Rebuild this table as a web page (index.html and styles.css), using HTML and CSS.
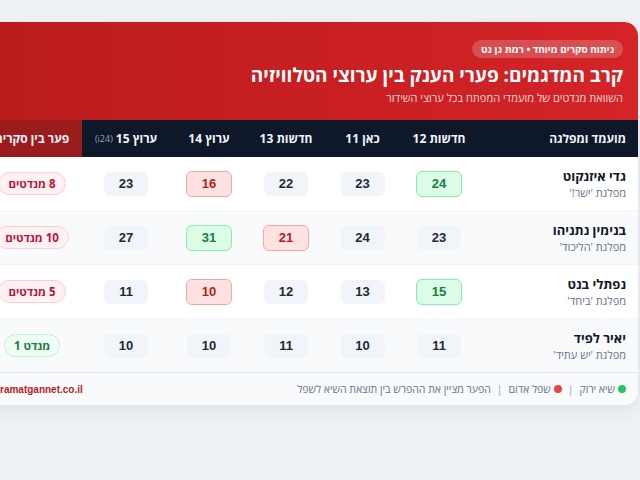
FILE: index.html
```html
<!DOCTYPE html>
<html lang="he" dir="rtl">
<head>
<meta charset="utf-8">
<title>קרב המדגמים</title>
<link rel="stylesheet" href="styles.css">
</head>
<body>
<div class="page">
  <div class="card">
    <header class="hero">
      <span class="badge">ניתוח סקרים מיוחד • רמת גן נט</span>
      <h1 class="title">קרב המדגמים: פערי הענק בין ערוצי הטלוויזיה</h1>
      <p class="subtitle">השוואת מנדטים של מועמדי המפתח בכל ערוצי השידור</p>
    </header>

    <div class="table">
      <div class="row head">
        <div class="cell name-cell">מועמד ומפלגה</div>
        <div class="cell">חדשות 12</div>
        <div class="cell">כאן 11</div>
        <div class="cell">חדשות 13</div>
        <div class="cell">ערוץ 14</div>
        <div class="cell">ערוץ 15 <span class="small">(i24)</span></div>
        <div class="cell gap-head">פער בין סקרים</div>
      </div>

      <div class="row">
        <div class="cell name-cell"><div class="name">גדי איזנקוט</div><div class="party">מפלגת 'ישר!'</div></div>
        <div class="cell"><span class="num hi">24</span></div>
        <div class="cell"><span class="num">23</span></div>
        <div class="cell"><span class="num">22</span></div>
        <div class="cell"><span class="num lo">16</span></div>
        <div class="cell"><span class="num">23</span></div>
        <div class="cell"><span class="pill red">8 מנדטים</span></div>
      </div>

      <div class="row alt">
        <div class="cell name-cell"><div class="name">בנימין נתניהו</div><div class="party">מפלגת 'הליכוד'</div></div>
        <div class="cell"><span class="num">23</span></div>
        <div class="cell"><span class="num">24</span></div>
        <div class="cell"><span class="num lo">21</span></div>
        <div class="cell"><span class="num hi">31</span></div>
        <div class="cell"><span class="num">27</span></div>
        <div class="cell"><span class="pill red">10 מנדטים</span></div>
      </div>

      <div class="row">
        <div class="cell name-cell"><div class="name">נפתלי בנט</div><div class="party">מפלגת 'ביחד'</div></div>
        <div class="cell"><span class="num hi">15</span></div>
        <div class="cell"><span class="num">13</span></div>
        <div class="cell"><span class="num">12</span></div>
        <div class="cell"><span class="num lo">10</span></div>
        <div class="cell"><span class="num">11</span></div>
        <div class="cell"><span class="pill red">5 מנדטים</span></div>
      </div>

      <div class="row alt last">
        <div class="cell name-cell"><div class="name">יאיר לפיד</div><div class="party">מפלגת 'יש עתיד'</div></div>
        <div class="cell"><span class="num">11</span></div>
        <div class="cell"><span class="num">10</span></div>
        <div class="cell"><span class="num">11</span></div>
        <div class="cell"><span class="num">10</span></div>
        <div class="cell"><span class="num">10</span></div>
        <div class="cell"><span class="pill green">מנדט 1</span></div>
      </div>
    </div>

    <footer class="foot">
      <div class="legend">
        <span class="dot dot-green"></span><span>שיא ירוק</span>
        <span class="sep">|</span>
        <span class="dot dot-red"></span><span>שפל אדום</span>
        <span class="sep">|</span>
        <span>הפער מציין את ההפרש בין תוצאת השיא לשפל</span>
      </div>
      <div class="site">ramatgannet.co.il</div>
    </footer>
  </div>
</div>
</body>
</html>
```

FILE: styles.css
```css
html, body {
  margin: 0;
  padding: 0;
  background: #eef2f7;
  font-family: "Open Sans", "Liberation Sans", Arial, sans-serif;
}

.page {
  direction: rtl;
  overflow: hidden;
  height: 480px;
  box-sizing: border-box;
  padding: 22px 2px 0 0;
}

.card {
  width: 656px;
  background: #ffffff;
  border-radius: 14px;
  overflow: hidden;
  box-shadow: 0 6px 18px rgba(15, 23, 42, 0.07);
}

.hero {
  display: flex;
  flex-direction: column;
  align-items: flex-start;
  height: 98px;
  box-sizing: border-box;
  padding: 18px 15px 0;
  background: linear-gradient(to left, #d42428 0%, #c81f22 50%, #b91c1c 100%);
  color: #ffffff;
}

.badge {
  display: block;
  height: 18px;
  line-height: 18px;
  padding: 0 9px;
  border-radius: 999px;
  background: rgba(255, 255, 255, 0.2);
  font-size: 10px;
  font-weight: 700;
}

.title {
  margin: 4px 0 0;
  font-size: 19px;
  line-height: 26px;
  font-weight: 700;
}

.subtitle {
  margin: 2px 0 0;
  font-size: 11px;
  line-height: 15px;
  color: rgba(255, 255, 255, 0.82);
}

.row {
  display: grid;
  grid-template-columns: 161px 76px 77px 76px 78px 88px 100px;
  height: 53px;
  border-bottom: 1px solid #f1f5f9;
  background: #ffffff;
}

.row.alt {
  background: #f8fafc;
}

.row.last {
  border-bottom: none;
}

.row.head {
  height: 37px;
  border-bottom: none;
  background: #0f172a;
  color: #f1f5f9;
  font-size: 12px;
  font-weight: 700;
}

.cell {
  display: flex;
  align-items: center;
  justify-content: center;
}

.name-cell {
  flex-direction: column;
  align-items: flex-start;
  justify-content: center;
  padding-right: 12px;
}

.head .name-cell {
  flex-direction: row;
  align-items: center;
  justify-content: flex-start;
}

.gap-head {
  background: #9b1c1c;
  white-space: nowrap;
}

.small {
  font-size: 9px;
  font-weight: 400;
  color: #94a3b8;
  margin-right: 3px;
}

.name {
  font-size: 13px;
  line-height: 18px;
  font-weight: 700;
  color: #0f172a;
}

.party {
  font-size: 11px;
  line-height: 15px;
  color: #64748b;
}

.num {
  display: flex;
  align-items: center;
  justify-content: center;
  width: 44px;
  height: 24px;
  border-radius: 6px;
  background: #f1f5f9;
  font-family: "Liberation Sans", Arial, sans-serif;
  font-size: 13px;
  font-weight: 700;
  color: #1e293b;
}

.num.hi {
  background: #dcfce7;
  border: 1px solid #86efac;
  color: #15803d;
}

.num.lo {
  background: #fee2e2;
  border: 1px solid #fca5a5;
  color: #b91c1c;
}

.pill {
  display: inline-flex;
  align-items: center;
  height: 21px;
  padding: 0 9px;
  border-radius: 999px;
  border: 1px solid;
  font-size: 11.5px;
  font-weight: 700;
  white-space: nowrap;
}

.pill.red {
  background: #fff1f2;
  border-color: #fecdd3;
  color: #b4173a;
}

.pill.green {
  background: #f0fdf4;
  border-color: #bbf7d0;
  color: #15803d;
}

.foot {
  display: flex;
  align-items: center;
  justify-content: space-between;
  height: 32px;
  padding: 0 12px 0 18px;
  background: #f8fafc;
  border-top: 1px solid #e2e8f0;
  font-size: 10.5px;
  color: #64748b;
}

.legend {
  display: flex;
  align-items: center;
}

.dot {
  width: 8px;
  height: 8px;
  border-radius: 50%;
  margin-left: 3px;
}

.dot-green { background: #22c55e; }
.dot-red { background: #ef4444; }

.sep {
  color: #94a3b8;
  margin: 0 6px;
}

.site {
  font-family: "Liberation Sans", Arial, sans-serif;
  font-size: 10px;
  font-weight: 700;
  color: #b91c1c;
}
```
